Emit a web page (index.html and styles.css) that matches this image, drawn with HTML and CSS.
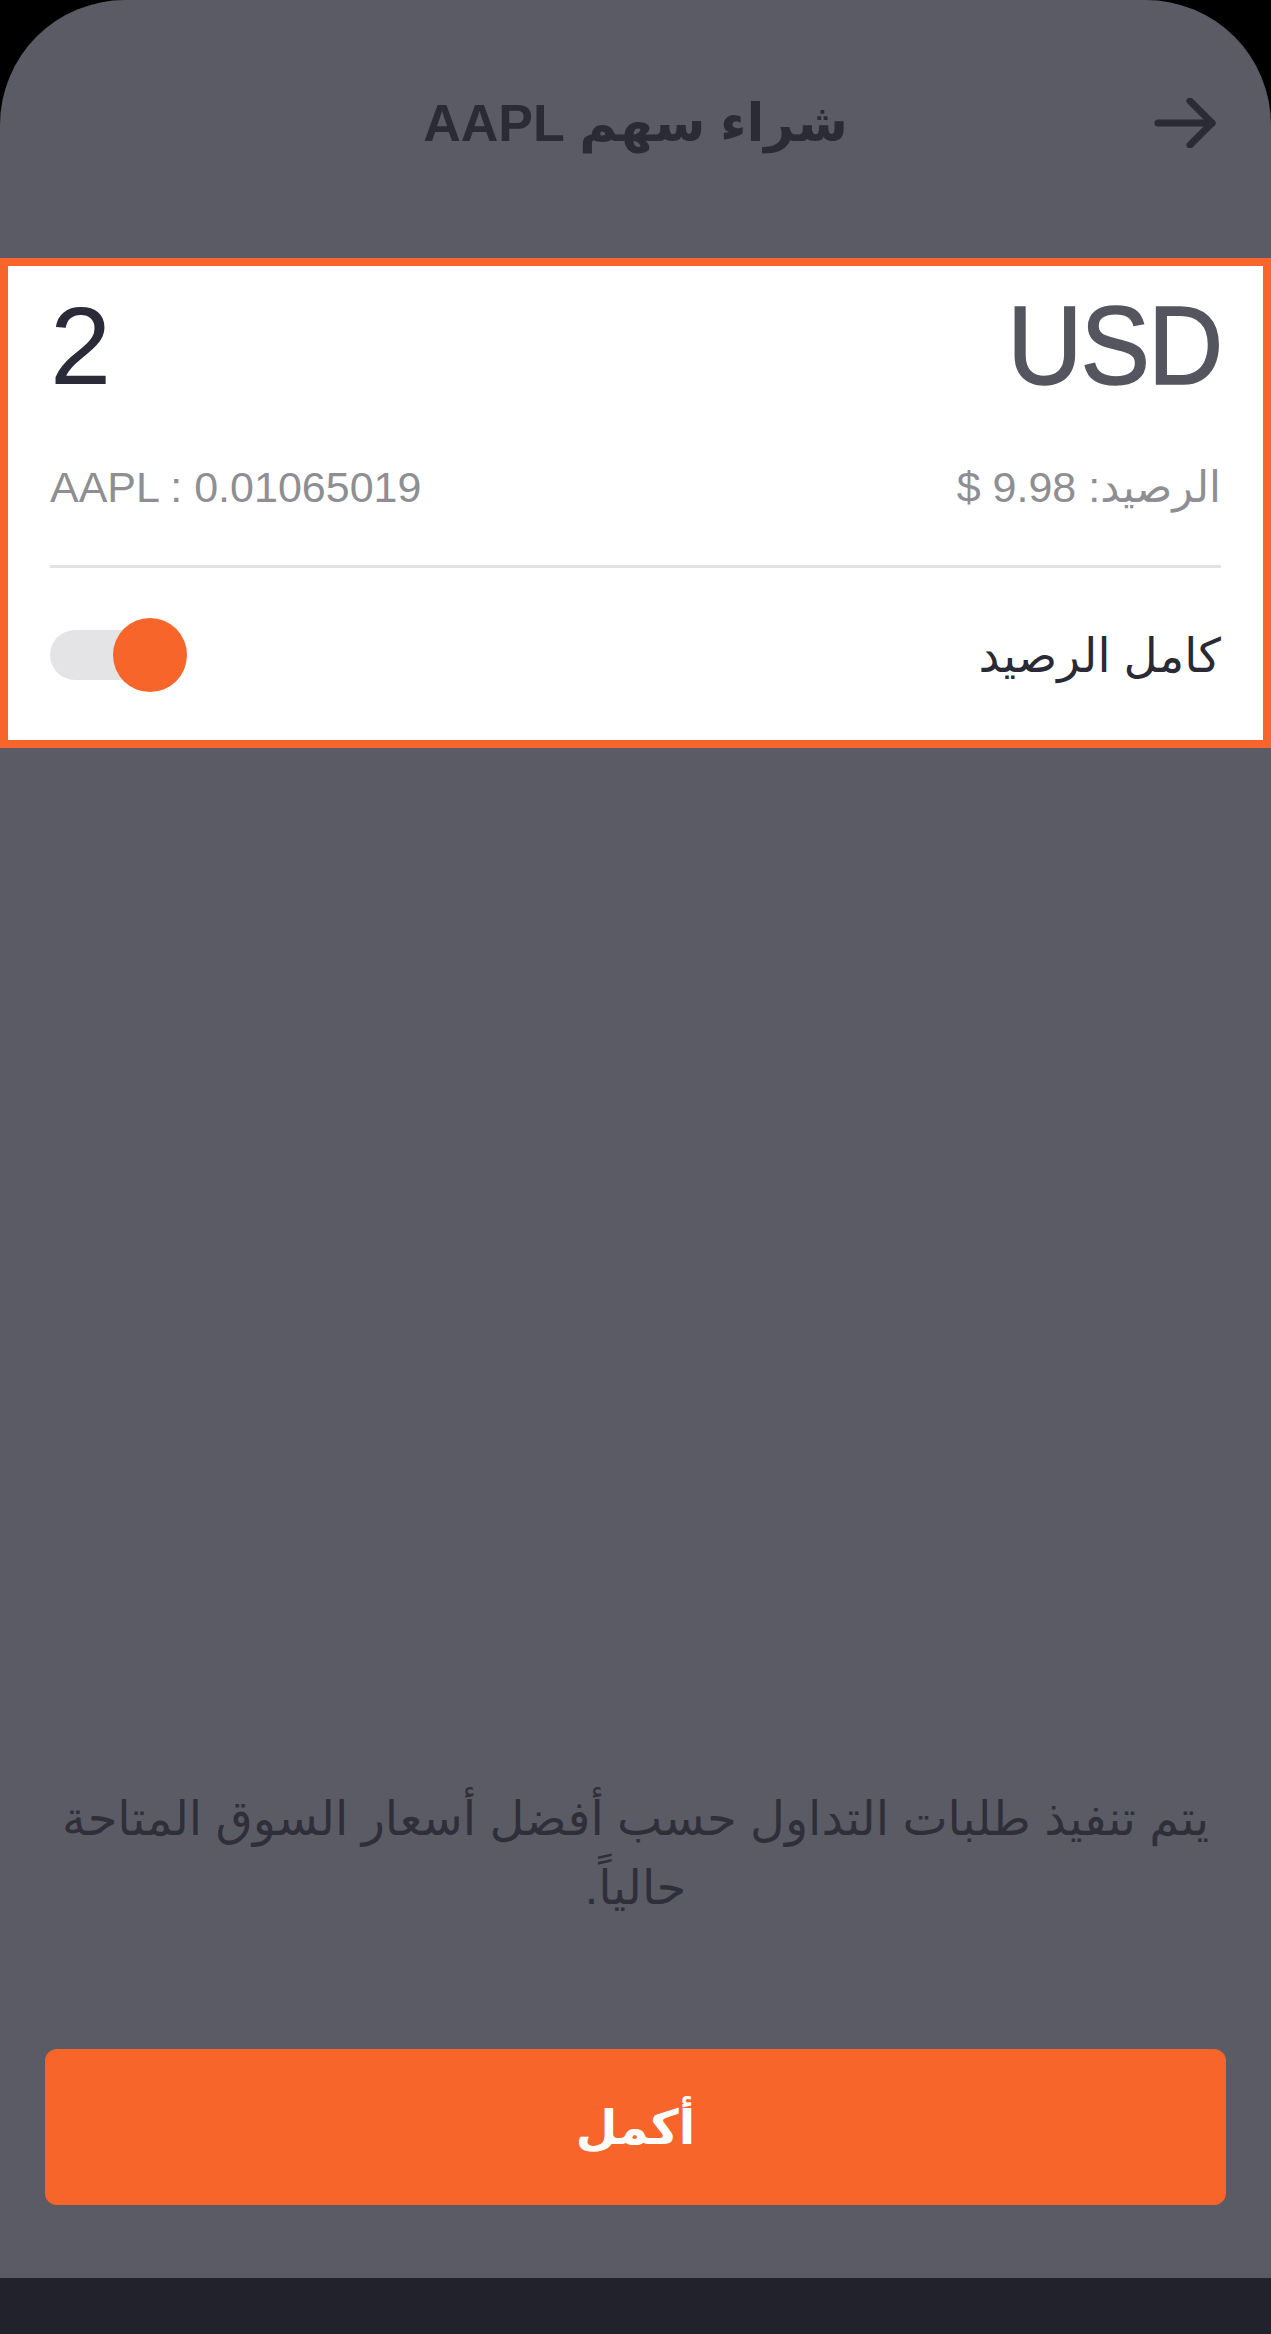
FILE: index.html
```html
<!DOCTYPE html>
<html lang="ar" dir="rtl">
<head>
<meta charset="utf-8">
<title>شراء سهم AAPL</title>
<link rel="stylesheet" href="styles.css">
</head>
<body>
<div class="device">
  <div class="screen">
    <header class="topbar">
      <button class="back" aria-label="رجوع">
        <svg width="62" height="50" viewBox="0 0 62 50" fill="none" stroke="#2b2b36" stroke-width="7" stroke-linecap="round" stroke-linejoin="round">
          <line x1="4" y1="25" x2="58" y2="25"/>
          <polyline points="36,3 58,25 36,47"/>
        </svg>
      </button>
      <h1 class="title">شراء سهم AAPL</h1>
      <span class="spacer"></span>
    </header>

    <section class="card">
      <div class="row amount-row">
        <span class="currency">USD</span>
        <span class="amount">2</span>
      </div>
      <div class="row info-row">
        <span class="balance">الرصيد: 9.98 $</span>
        <span class="shares" dir="ltr">AAPL : 0.01065019</span>
      </div>
      <div class="divider"></div>
      <div class="row toggle-row">
        <span class="toggle-label">كامل الرصيد</span>
        <span class="switch"><span class="track"></span><span class="thumb"></span></span>
      </div>
    </section>

    <div class="fill"></div>

    <p class="note">يتم تنفيذ طلبات التداول حسب أفضل أسعار السوق المتاحة حالياً.</p>

    <button class="cta">أكمل</button>
  </div>
  <div class="homebar"></div>
</div>
</body>
</html>
```

FILE: styles.css
```css
* { box-sizing: border-box; }
html, body {
  margin: 0;
  padding: 0;
  background: #000;
}
body {
  font-family: "Liberation Sans", "DejaVu Sans", sans-serif;
  width: 1271px;
  height: 2334px;
  overflow: hidden;
}
.device {
  display: flex;
  flex-direction: column;
  height: 2334px;
}
.screen {
  height: 2278px;
  background: #5b5b66;
  border-radius: 125px 125px 0 0;
  display: flex;
  flex-direction: column;
}
.homebar {
  flex: 1;
  background: #22222c;
}
.topbar {
  height: 258px;
  display: grid;
  grid-template-columns: 1fr auto 1fr;
  align-items: center;
  padding: 0 55px 12px 55px;
}
.back {
  justify-self: start;
  background: none;
  border: 0;
  padding: 0;
  display: flex;
}
.title {
  margin: 0;
  font-size: 52px;
  font-weight: 700;
  color: #2b2b36;
  line-height: 1;
}
.card {
  background: #fff;
  border: 8px solid #f8652a;
  padding: 25px 42px 48px;
  display: flex;
  flex-direction: column;
}
.row {
  display: flex;
  justify-content: space-between;
  align-items: center;
}
.amount-row {
  height: 110px;
}
.currency {
  display: inline-block;
  font-size: 112px;
  line-height: 110px;
  color: #55555f;
  letter-spacing: -2px;
  -webkit-text-stroke: 1.5px #55555f;
  transform: scaleX(0.93);
  transform-origin: right center;
}
.amount {
  font-size: 110px;
  line-height: 110px;
  color: #2a2a38;
}
.info-row {
  margin-top: 61px;
  height: 50px;
  font-size: 43px;
  line-height: 50px;
  color: #8e8e93;
}
.divider {
  margin-top: 53px;
  height: 3px;
  background: #e2e2e4;
}
.toggle-row {
  margin-top: 50px;
  height: 74px;
}
.toggle-label {
  font-size: 47px;
  color: #2a2a35;
}
.switch {
  position: relative;
  width: 137px;
  height: 74px;
  display: block;
}
.track {
  position: absolute;
  left: 0;
  top: 12px;
  width: 110px;
  height: 50px;
  border-radius: 25px;
  background: #e4e4e6;
}
.thumb {
  position: absolute;
  left: 63px;
  top: 0;
  width: 74px;
  height: 74px;
  border-radius: 50%;
  background: #f8652a;
}
.fill { flex: 1; }
.note {
  margin: 0 40px 127px;
  text-align: center;
  font-size: 48px;
  line-height: 69px;
  color: #2f2f3a;
}
.cta {
  margin: 0 45px 73px;
  height: 156px;
  border: 0;
  border-radius: 12px;
  background: #f8652a;
  color: #fff;
  font-family: "Liberation Sans", "DejaVu Sans", sans-serif;
  font-size: 48px;
  font-weight: 700;
}
```
